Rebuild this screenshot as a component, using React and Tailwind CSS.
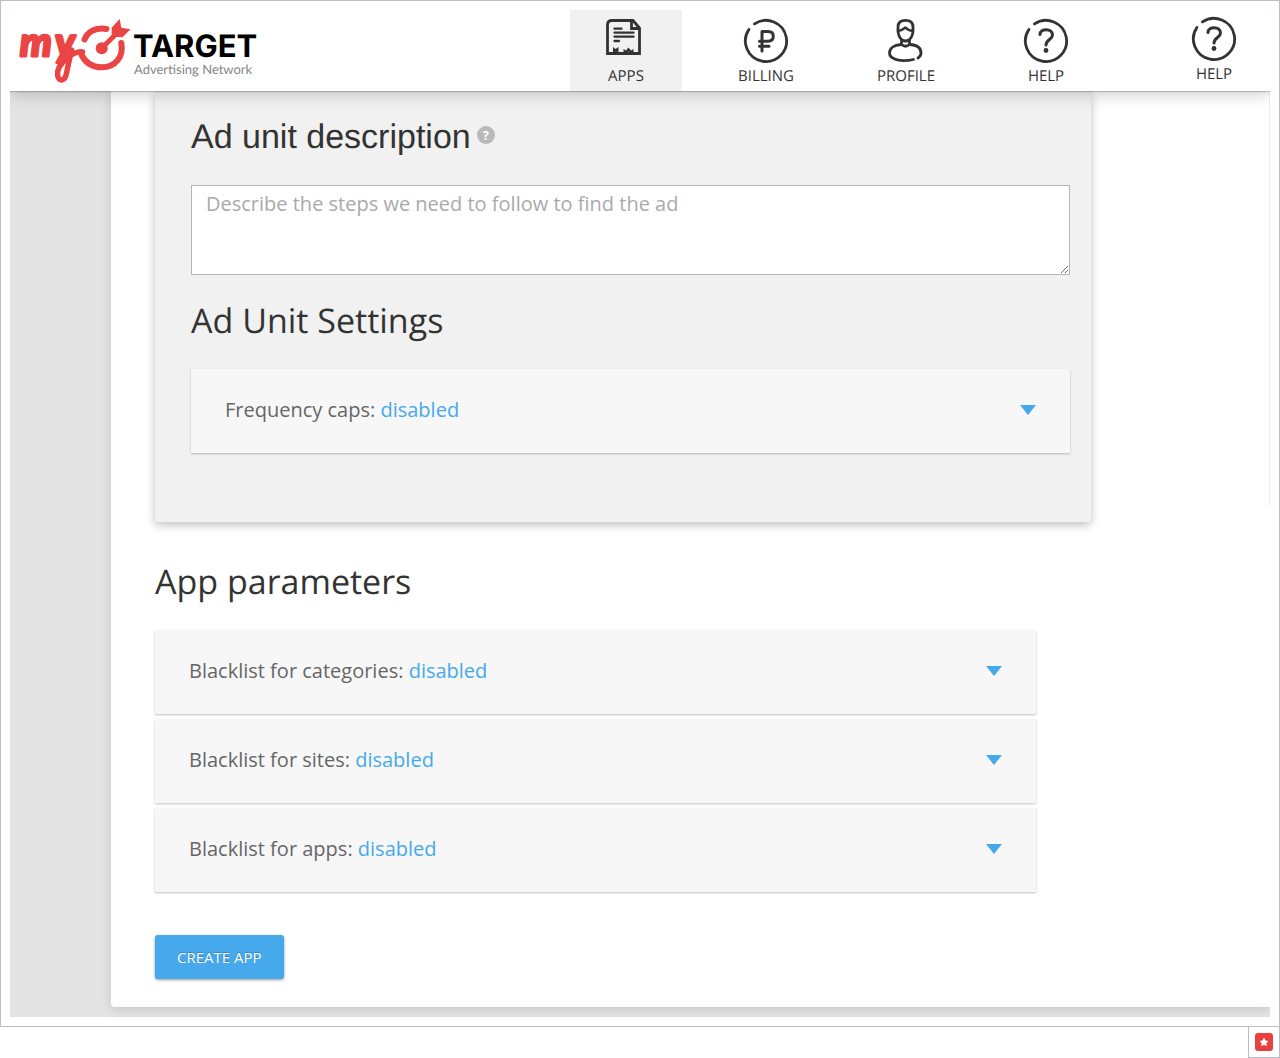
import React from "react";

function Logo() {
  return (
    <a href="#home" aria-label="myTarget Advertising Network" className="flex items-start pl-[5px] pt-1">
      <svg width="118" height="72" viewBox="15 14 118 72" fill="none" stroke="#ea4444" strokeLinecap="round" strokeLinejoin="round">
        <g fill="#ea4444" strokeWidth="3" fontFamily="Lato, sans-serif" fontWeight="700" fontStyle="italic">
          <text x="20" y="56" fontSize="40">m</text>
          <text x="55" y="56" fontSize="40">y</text>
        </g>
        <path d="M71.500 50 L66.500 73 C65 81.500 59 82 57.700 76 C56.500 70 61 63 68 57.500 C73 53.500 77 51 82.500 52" strokeWidth="5.5" />
        <path d="M84.500 39.500 C88 31 97 27 106.500 29" strokeWidth="6" />
        <path d="M80.500 52.500 C84 61 91 67.300 102 67.300 C115 67.300 124 57 121.300 43" strokeWidth="6" />
        <circle cx="101.700" cy="48.300" r="6" fill="#ea4444" stroke="none" />
        <path d="M102 48 L117 33" strokeWidth="5" />
        <path d="M119.700 19 L121.300 27.700 L130.500 29.300 L122.500 37.300 L114.500 36.800 L111.500 33.500 L111.800 27.500Z" fill="#ea4444" stroke="none" />
      </svg>
      <span className="flex flex-col pt-[17px]">
        <span className="font-[Inter,sans-serif] text-[31px] leading-8 font-bold text-black">TARGET</span>
        <span className="pl-px font-[Lato,sans-serif] text-[13px] leading-3 text-[#858585]">Advertising Network</span>
      </span>
    </a>
  );
}

function Icon({ children }) {
  return (
    <svg width="46" height="46" viewBox="0 0 46 46" fill="none" stroke="#333" strokeWidth="2.8" strokeLinecap="round" strokeLinejoin="round" aria-hidden="true">
      {children}
    </svg>
  );
}

const openRing = <path d="M11.500 5.900 A20.600 20.600 0 1 1 5.900 11.500" />;

function AppsIcon() {
  return (
    <Icon>
      <g strokeLinecap="butt" strokeLinejoin="miter">
        <path d="M30 2.500H9Q4.500 2.500 4.500 7V35.500H36.500V10Z" />
        <path d="M28.500 2.500V10.500H36.500" />
      </g>
      <path d="M11.500 10.700H18.500M11.500 14.700H30.500M11.500 18.700H30.500M11.500 23H16" strokeWidth="2.300" />
      <path d="M10 36V29L12.500 31L15.500 29V36ZM20.500 36V31L23 32.500L25.500 29.500L28 32.500L30.500 31V36H28.500L25.500 33.500L23 36Z" fill="#333" stroke="none" />
    </Icon>
  );
}

function BillingIcon() {
  return (
    <Icon>
      {openRing}
      <path d="M19 33V13.500H25Q30.300 13.500 30.300 18.300Q30.300 23.200 25 23.200H16.500M16.500 28.200H26" strokeWidth="3" />
    </Icon>
  );
}

function ProfileIcon() {
  return (
    <Icon>
      <path d="M15 13V9Q15 2.300 22.500 2.300Q30 2.300 30 9V13Q29.500 19 26 22Q22.500 24 19 22Q15.500 19 15 13Z" />
      <path d="M15 13Q19 12.500 22.500 9.500Q25 12.500 30 13" strokeWidth="2.400" />
      <path d="M18.500 23V26.500Q22.500 30 26.500 26.500V23" />
      <path d="M18 26.500C10.500 27 6.500 30.500 6.500 35C6.500 41 17 44.500 30.500 41.500" />
      <path d="M27 26.500C34.500 27 38 30.500 38 35Q38 38 35 40" />
    </Icon>
  );
}

function HelpIcon() {
  return (
    <Icon>
      {openRing}
      <path d="M17 16.500C17 10 29.500 10 29.500 17C29.500 21.500 23 21.500 23 27" strokeWidth="3" />
      <circle cx="23" cy="32.500" r="2.400" fill="#333" stroke="none" />
    </Icon>
  );
}

function NavItem({ label, icon, active, className = "" }) {
  return (
    <a
      href={"#" + label.toLowerCase()}
      className={`flex w-28 flex-col items-center pt-2 text-[15px] leading-5 text-[#333] ${active ? "bg-[#f1f1f1]" : ""} ${className}`}
    >
      {icon}
      <span className="pt-0.5">{label}</span>
    </a>
  );
}

function SettingRow({ label }) {
  return (
    <button
      type="button"
      className="flex h-[84px] w-full items-center justify-between bg-[#f7f7f7] px-[34px] pb-0.5 text-left text-[20px] leading-7 text-[#666] shadow-[0_1px_2px_rgba(0,0,0,0.25)]"
    >
      <span>
        {label}: <span className="text-[#46a9ec]">disabled</span>
      </span>
      <svg width="16" height="10" viewBox="0 0 16 10" aria-hidden="true">
        <path d="M0 0H16L8 10Z" fill="#46a9ec" />
      </svg>
    </button>
  );
}

export default function App() {
  return (
    <div className="bg-white font-['Open_Sans',sans-serif] text-[#333] [text-rendering:geometricPrecision]">
      <div className="border border-[#b8bfcb] p-[9px]">
        <header className="relative z-10 flex h-[81px] items-stretch justify-between bg-white shadow-[0_1px_1px_rgba(0,0,0,0.2),0_3px_16px_rgba(0,0,0,0.2)] [clip-path:inset(0_0_-24px_0)]">
          <Logo />
          <nav className="flex gap-7">
            <NavItem label="APPS" icon={<AppsIcon />} active />
            <NavItem label="BILLING" icon={<BillingIcon />} />
            <NavItem label="PROFILE" icon={<ProfileIcon />} />
            <NavItem label="HELP" icon={<HelpIcon />} />
            <NavItem label="HELP" icon={<HelpIcon />} className="ml-7 -mt-0.5" />
          </nav>
        </header>

        <div className="relative overflow-hidden bg-[#e4e4e4] pb-2.5 pl-[101px]">
          <main className="rounded-bl bg-white pb-7 pl-11 shadow-[0_2px_12px_rgba(0,0,0,0.14)]">
            <section className="w-full max-w-[936px] rounded-b bg-[#f1f1f1] pt-6 pr-[21px] pb-[69px] pl-9 shadow-[0_3px_10px_rgba(0,0,0,0.25)]">
              <div className="flex items-center gap-1.5">
                <h2 className="font-['Liberation_Sans',sans-serif] text-[34px] leading-[44px]">
                  <label htmlFor="description">Ad unit description</label>
                </h2>
                <button type="button" aria-label="About the description" className="mb-1 flex size-[18px] items-center justify-center rounded-full bg-[#b9b9b9] text-[13px] leading-4 font-bold text-white">
                  ?
                </button>
              </div>
              <textarea
                id="description"
                placeholder="Describe the steps we need to follow to find the ad"
                className="mt-[26px] block h-[90px] w-full resize border border-[#b5b5b5] bg-white px-3.5 py-1 text-[20px] leading-7 placeholder:text-[#aaa]"
              />
              <h2 className="mt-[22px] mb-[26px] text-[34px] leading-[46px]">Ad Unit Settings</h2>
              <SettingRow label="Frequency caps" />
            </section>

            <section className="w-full max-w-[881px]">
              <h2 className="pt-9 pb-[26px] text-[34px] leading-[46px]">App parameters</h2>
              <div className="flex flex-col gap-[5px]">
                <SettingRow label="Blacklist for categories" />
                <SettingRow label="Blacklist for sites" />
                <SettingRow label="Blacklist for apps" />
              </div>
              <button type="button" className="mt-[43px] h-11 rounded-[3px] bg-[#46a9ec] px-[22px] text-[15px] leading-5 text-white shadow-[0_1px_3px_rgba(0,0,0,0.4)] [text-shadow:0_-1px_1px_rgba(0,0,0,0.25)]">
                CREATE APP
              </button>
            </section>
          </main>
          <div className="absolute top-0 right-0 h-[415px] w-px bg-[#eee]" aria-hidden="true" />
        </div>
      </div>

      <footer className="flex justify-end">
        <a href="#favorites" aria-label="Favorites" className="flex h-[31px] w-8 items-center justify-center border border-t-0 border-[#b8bfcb]">
          <svg width="18" height="18" viewBox="0 0 18 18">
            <rect width="18" height="18" rx="3" fill="#e8403c" />
            <path d="M9 4.500L10.500 7.500L13.500 8L11.300 10.200L11.800 13.300L9 11.800L6.200 13.300L6.700 10.200L4.500 8L7.500 7.500Z" fill="#fff" />
          </svg>
        </a>
      </footer>
    </div>
  );
}
